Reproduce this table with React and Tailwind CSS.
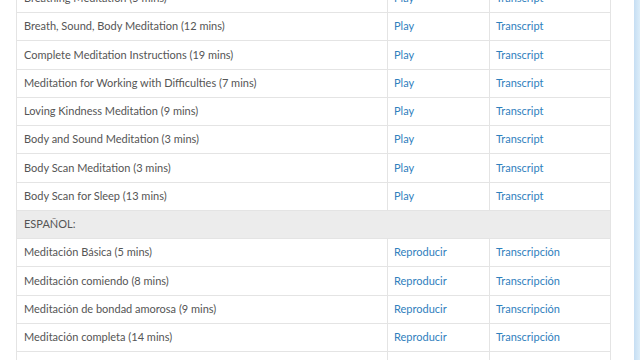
const english = [
  'Breathing Meditation (5 mins)',
  'Breath, Sound, Body Meditation (12 mins)',
  'Complete Meditation Instructions (19 mins)',
  'Meditation for Working with Difficulties (7 mins)',
  'Loving Kindness Meditation (9 mins)',
  'Body and Sound Meditation (3 mins)',
  'Body Scan Meditation (3 mins)',
  'Body Scan for Sleep (13 mins)',
];

const spanish = [
  'Meditación Básica (5 mins)',
  'Meditación comiendo (8 mins)',
  'Meditación de bondad amorosa (9 mins)',
  'Meditación completa (14 mins)',
];

function Row({ title, play, transcript }) {
  return (
    <tr className="h-[28.25px] border-t border-[#e4e4e4]">
      <td className="px-[7px] text-[#555555]">{title}</td>
      <td className="px-[6px] border-l border-[#e4e4e4] text-[#2f80bd]">{play}</td>
      <td className="px-[6px] border-l border-[#e4e4e4] text-[#2f80bd]">{transcript}</td>
    </tr>
  );
}

export default function App() {
  return (
    <div className="w-[640px] h-[360px] overflow-hidden bg-white flex font-['Lato','Open_Sans',sans-serif] text-[11px]">
      <div className="w-[634px] pl-[16px] pr-[23px]">
        <table className="w-[595px] -mt-[16.25px] border-collapse border-x border-[#e4e4e4] table-fixed">
          <colgroup>
            <col className="w-[371px]" />
            <col className="w-[102px]" />
            <col />
          </colgroup>
          <tbody>
            {english.map((t) => (
              <Row key={t} title={t} play="Play" transcript="Transcript" />
            ))}
            <tr className="h-[28.25px] border-t border-[#e4e4e4] bg-[#ececec]">
              <td colSpan={3} className="px-[7px] text-[#555555]">ESPAÑOL:</td>
            </tr>
            {spanish.map((t) => (
              <Row key={t} title={t} play="Reproducir" transcript="Transcripción" />
            ))}
            <tr className="h-[28.25px] border-t border-[#e4e4e4]">
              <td className="px-[7px]">&nbsp;</td>
              <td className="border-l border-[#e4e4e4]"></td>
              <td className="border-l border-[#e4e4e4]"></td>
            </tr>
          </tbody>
        </table>
      </div>
      <div className="flex-1 bg-gradient-to-r from-[#c6def3] to-[#dcedf9]"></div>
    </div>
  );
}
